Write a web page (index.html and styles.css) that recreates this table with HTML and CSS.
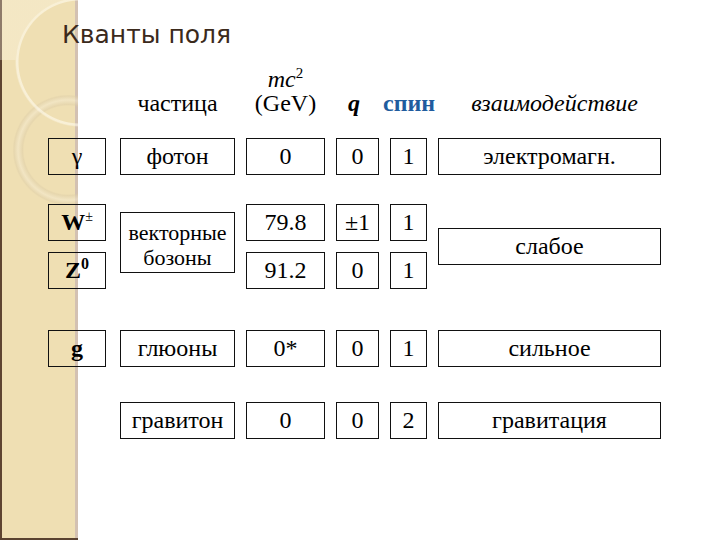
FILE: index.html
```html
<!DOCTYPE html>
<html lang="ru">
<head>
<meta charset="utf-8">
<title>Кванты поля</title>
<link rel="stylesheet" href="styles.css">
</head>
<body>
<div class="slide">
  <h1 class="title">Кванты поля</h1>
  <div class="table">
    <div class="row head">
      <div></div>
      <div class="hcell">частица</div>
      <div class="hcell"><i>mc</i><sup>2</sup><br>(GeV)</div>
      <div class="hcell charge"><b><i>q</i></b></div>
      <div class="hcell spin">спин</div>
      <div class="hcell inter"><i>взаимодействие</i></div>
    </div>

    <div class="row r-photon">
      <div class="box sym"><span>γ</span></div>
      <div class="box"><span>фотон</span></div>
      <div class="box"><span>0</span></div>
      <div class="box"><span>0</span></div>
      <div class="box"><span>1</span></div>
      <div class="box"><span>электромагн.</span></div>
    </div>

    <div class="row group">
      <div class="box sym"><span><b>W</b><sup class="pm">±</sup></span></div>
      <div class="box vector"><span>векторные<br>бозоны</span></div>
      <div class="box"><span>79.8</span></div>
      <div class="box"><span>±1</span></div>
      <div class="box"><span>1</span></div>
      <div class="box weak"><span>слабое</span></div>
      <div class="box sym"><span><b>Z</b><sup class="zero">0</sup></span></div>
      <div class="box"><span>91.2</span></div>
      <div class="box"><span>0</span></div>
      <div class="box"><span>1</span></div>
    </div>

    <div class="row r-gluon">
      <div class="box sym"><span><b>g</b></span></div>
      <div class="box"><span>глюоны</span></div>
      <div class="box"><span>0*</span></div>
      <div class="box"><span>0</span></div>
      <div class="box"><span>1</span></div>
      <div class="box"><span>сильное</span></div>
    </div>

    <div class="row r-graviton">
      <div></div>
      <div class="box"><span>гравитон</span></div>
      <div class="box"><span>0</span></div>
      <div class="box"><span>0</span></div>
      <div class="box"><span>2</span></div>
      <div class="box"><span>гравитация</span></div>
    </div>
  </div>
</div>
</body>
</html>
```

FILE: styles.css
```css
html, body {
  margin: 0;
  padding: 0;
}

body {
  width: 720px;
  height: 540px;
  overflow: hidden;
  font-family: "Liberation Serif", "Times New Roman", serif;
  color: #000;
  background-color: #fff;
  background-image:
    linear-gradient(#5a4230, #5a4230),
    radial-gradient(circle at 80px 62px, rgba(0,0,0,0) 64px, rgba(255,250,236,0.3) 65px),
    radial-gradient(circle at 80px 62px, rgba(0,0,0,0) 61px, rgba(255,251,238,0.6) 62px, rgba(255,251,238,0.6) 63.5px, rgba(0,0,0,0) 65px),
    radial-gradient(circle at 68px 150px, rgba(0,0,0,0) 44px, rgba(222,206,168,0.5) 45.5px, rgba(244,234,208,0.55) 50px, rgba(222,206,168,0.5) 54px, rgba(0,0,0,0) 55.5px),
    linear-gradient(to right, #5e4431 0 2px, #efdfb3 2px 75px, #d3c1b2 75px 78px, #fff 78px);
  background-repeat: no-repeat;
  background-size: 78px 2px, 78px 60px, 78px 540px, 78px 540px, 720px 540px;
  background-position: 0 538px, 0 0, 0 0, 0 0, 0 0;
}

.slide {
  width: 720px;
  height: 540px;
}

.title {
  margin: 0;
  padding: 20px 0 0 62px;
  font-family: "DejaVu Sans", "Open Sans", sans-serif;
  font-weight: 400;
  font-size: 25px;
  line-height: 30px;
  color: #3b2a1c;
}

.table {
  display: flex;
  flex-direction: column;
  padding-left: 48px;
}

.row {
  display: grid;
  grid-template-columns: 61px 115px 79px 43px 37px 223px;
  column-gap: 11px;
  font-family: "Liberation Serif", "Times New Roman", serif;
  font-size: 24px;
}

.head {
  margin-top: 17px;
  margin-bottom: 23px;
  align-items: end;
  line-height: 24px;
}

.hcell {
  text-align: center;
}

.hcell sup {
  font-size: 15px;
  line-height: 0;
  vertical-align: 9px;
}

.charge {
  text-align: left;
  padding-left: 12px;
}

.spin {
  font-weight: 700;
  color: #1f5c9e;
  white-space: nowrap;
  margin-left: -7px;
}

.inter {
  padding-left: 10px;
}

.box {
  box-sizing: border-box;
  height: 37px;
  border: 1px solid #111;
  display: flex;
  align-items: center;
  justify-content: center;
  white-space: nowrap;
}

.sym {
  margin-right: 3px;
}

.sym b {
  font-weight: 700;
}

.sym sup {
  line-height: 0;
}

.pm {
  font-size: 14px;
  vertical-align: 9px;
}

.zero {
  font-size: 16px;
  font-weight: 700;
  vertical-align: 9px;
}

.group {
  margin-top: 29px;
  grid-template-rows: 37px 37px;
  row-gap: 11px;
}

.vector {
  grid-row: span 2;
  height: auto;
  margin: 8px 0 16px;
  padding-top: 4px;
  font-size: 22px;
  line-height: 25px;
  text-align: center;
}

.weak {
  grid-row: span 2;
  align-self: center;
}

.r-gluon {
  margin-top: 41px;
}

.r-graviton {
  margin-top: 35px;
}
```
